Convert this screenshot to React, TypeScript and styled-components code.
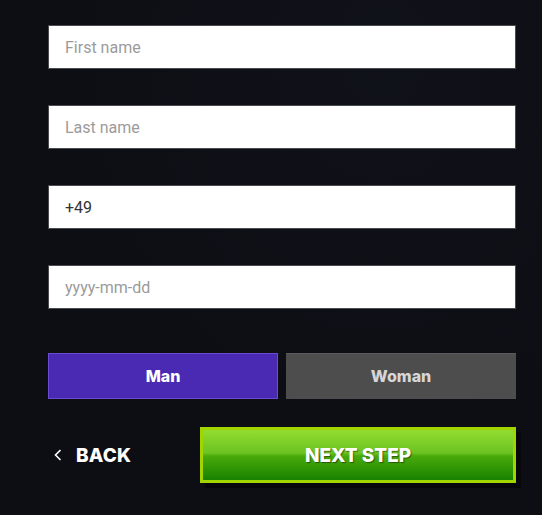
import React from 'react'
import styled, { createGlobalStyle } from 'styled-components'

const GlobalStyle = createGlobalStyle`
  html, body {
    margin: 0;
    padding: 0;
    background: #0d0e14;
  }
  body {
    font-family: Roboto, "Liberation Sans", sans-serif;
  }
  input::placeholder {
    color: #9b9b9b;
    opacity: 1;
  }
`

const Page = styled.div`
  width: 542px;
  height: 515px;
  box-sizing: border-box;
  padding: 25px 26px 0 48px;
  background: radial-gradient(ellipse at 70% 10%, #101219 0%, #0d0e14 60%);
`

const Form = styled.form`
  display: flex;
  flex-direction: column;
  width: 468px;
`

const Fields = styled.div`
  display: flex;
  flex-direction: column;
  gap: 36px;
`

const Field = styled.input`
  box-sizing: border-box;
  width: 100%;
  height: 44px;
  margin: 0;
  padding: 0 16px;
  border: 1px solid #4a4b50;
  border-radius: 0;
  background: #fff;
  font-family: Roboto, "Liberation Sans", sans-serif;
  font-size: 16px;
  color: #333;
  outline: none;
`

const Gender = styled.div`
  display: grid;
  grid-template-columns: 1fr 1fr;
  gap: 8px;
  margin-top: 44px;
`

const GenderButton = styled.button<{ $active?: boolean }>`
  height: 46px;
  margin: 0;
  border: 1px solid ${p => (p.$active ? '#6a4bd6' : '#4d4d4d')};
  border-top-color: ${p => (p.$active ? '#6a4bd6' : '#5c5c5c')};
  background: ${p => (p.$active ? '#4b2ab3' : '#4d4d4d')};
  color: ${p => (p.$active ? '#ffffff' : '#d6d6d6')};
  font-family: Inter, "Liberation Sans", sans-serif;
  font-weight: 800;
  font-size: 16px;
  cursor: pointer;
`

const Actions = styled.div`
  display: flex;
  align-items: center;
  margin-top: 28px;
`

const Back = styled.button`
  display: flex;
  align-items: center;
  gap: 14px;
  width: 152px;
  height: 56px;
  margin: 0;
  padding: 0 0 0 6px;
  border: none;
  background: transparent;
  color: #fff;
  font-family: Inter, "Liberation Sans", sans-serif;
  font-weight: 800;
  font-size: 19px;
  letter-spacing: 0.2px;
  cursor: pointer;
`

const Next = styled.button`
  flex: 1;
  height: 56px;
  margin: 0;
  border: 3px solid #a2d400;
  background: linear-gradient(
    to bottom,
    #92dc30 0%,
    #6cc322 46%,
    #4aaa0a 52%,
    #178200 100%
  );
  box-shadow: 5px 5px 0 rgba(0, 0, 0, 0.45);
  color: #fff;
  font-family: Inter, "Liberation Sans", sans-serif;
  font-weight: 800;
  font-size: 19px;
  text-shadow: 1px 1px 1px rgba(0, 0, 0, 0.45);
  cursor: pointer;
`

const App = () => {
  return (
    <>
      <GlobalStyle />
      <Page>
        <Form onSubmit={e => e.preventDefault()}>
          <Fields>
            <Field placeholder="First name" />
            <Field placeholder="Last name" />
            <Field defaultValue="+49" />
            <Field placeholder="yyyy-mm-dd" />
          </Fields>
          <Gender>
            <GenderButton type="button" $active>
              Man
            </GenderButton>
            <GenderButton type="button">Woman</GenderButton>
          </Gender>
          <Actions>
            <Back type="button">
              <svg width="8" height="12" viewBox="0 0 8 12" fill="none">
                <path d="M6.5 1 L1.5 6 L6.5 11" stroke="#fff" strokeWidth="1.6" />
              </svg>
              BACK
            </Back>
            <Next type="submit">NEXT STEP</Next>
          </Actions>
        </Form>
      </Page>
    </>
  )
}

export default App
